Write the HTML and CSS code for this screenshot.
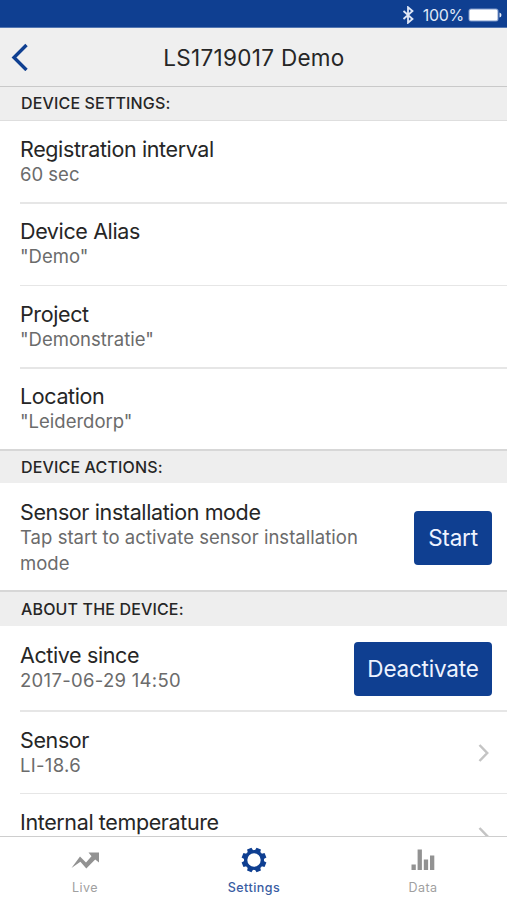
FILE: index.html
```
<!DOCTYPE html>
<html lang="en">
<head>
<meta charset="utf-8">
<title>LS1719017 Demo</title>
<link rel="stylesheet" href="styles.css">
</head>
<body>
<div class="app">
  <div class="status">
    <svg class="bluetooth" width="12" height="18" viewBox="0 0 12 18"><path d="M1.5 5 10.5 13 6 16.8V1.2L10.5 5 1.5 13"/></svg>
    <span class="percent">100%</span>
    <svg class="battery" width="34" height="14" viewBox="0 0 34 14"><rect x=".5" y=".5" width="30" height="13" rx="2.5" fill="#7d98ca"/><rect x="1.5" y="1.5" width="28" height="11" rx="1.5" fill="#fff"/><path d="M31.5 4.5q2 .5 2 2.5t-2 2.5z" fill="#e5ebf6"/></svg>
  </div>
  <header class="navbar">
    <svg class="back" width="18" height="28" viewBox="0 0 18 28"><path d="M16.5 2 4 14.5 16.5 27"/></svg>
    <h1>LS1719017 Demo</h1>
  </header>
  <main class="list">
    <h2 class="section first">DEVICE SETTINGS:</h2>
    <div class="row"><div class="copy"><div class="title">Registration interval</div><div class="sub">60 sec</div></div></div>
    <div class="row r82"><div class="copy"><div class="title">Device Alias</div><div class="sub">"Demo"</div></div></div>
    <div class="row"><div class="copy"><div class="title">Project</div><div class="sub">"Demonstratie"</div></div></div>
    <div class="row last"><div class="copy"><div class="title">Location</div><div class="sub">"Leiderdorp"</div></div></div>
    <h2 class="section">DEVICE ACTIONS:</h2>
    <div class="row action"><div class="copy"><div class="title">Sensor installation mode</div><div class="sub wide">Tap start to activate sensor installation mode</div></div><button class="start">Start</button></div>
    <h2 class="section about">ABOUT THE DEVICE:</h2>
    <div class="row active"><div class="copy"><div class="title">Active since</div><div class="sub numeric">2017-06-29 14:50</div></div><button class="deactivate">Deactivate</button></div>
    <div class="row r82 sensor"><div class="copy"><div class="title">Sensor</div><div class="sub numeric">LI-18.6</div></div><svg class="chevron" width="12" height="20" viewBox="0 0 12 20"><path d="M2.5 2 10.2 10 2.5 18"/></svg></div>
    <div class="row"><div class="copy"><div class="title">Internal temperature</div></div><svg class="chevron" width="12" height="20" viewBox="0 0 12 20"><path d="M2.5 2 10.2 10 2.5 18"/></svg></div>
  </main>
  <nav class="tabs">
    <a class="tab"><svg width="30" height="24" viewBox="0 0 30 24"><path fill="#929292" d="M1.5 20 10 8.5 16 14.5 21.5 8.2 18.5 4.5H29V14.5L25.2 11.5 16.3 20.5 10.4 13.8Z"/></svg><span>Live</span></a>
    <a class="tab selected"><svg width="26" height="26" viewBox="-13 -13 26 26"><g fill="#0f3f91"><path id="tooth" d="M-3-8.5-2.4-12.4H2.4L3-8.5Z" transform="rotate(22.5)"/><use href="#tooth" transform="rotate(45)"/><use href="#tooth" transform="rotate(90)"/><use href="#tooth" transform="rotate(135)"/><use href="#tooth" transform="rotate(180)"/><use href="#tooth" transform="rotate(225)"/><use href="#tooth" transform="rotate(270)"/><use href="#tooth" transform="rotate(315)"/></g><circle r="8.4" fill="none" stroke="#0f3f91" stroke-width="3.4"/></svg><span>Settings</span></a>
    <a class="tab"><svg width="24" height="24" viewBox="0 0 24 24"><path fill="#929292" d="M.5 16.5h4.3V22H.5zM6.6 1.5h4.3V22H6.6zM12.8 11.5h4.3V22h-4.3zM19 7.5h4.3V22H19z"/></svg><span>Data</span></a>
  </nav>
</div>
</body>
</html>
```
FILE: styles.css
```
* { box-sizing: border-box; }
body { margin: 0; font-family: Inter, "Liberation Sans", sans-serif; background: #fff; color: #262626; }
.app { width: 507px; height: 900px; display: flex; flex-direction: column; overflow: hidden; }
.status { height: 28px; flex: none; background: #0f3f91; border-bottom: 1px solid #5477b2; display: flex; align-items: center; justify-content: flex-end; padding: 2px 6px 0 0; color: #dfe7f6; }
.bluetooth { fill: none; stroke: #dfe7f6; stroke-width: 1.8; margin-right: 9px; }
.percent { font-size: 16px; letter-spacing: -.3px; margin-right: 4px; }
.battery { margin-right: -1px; }
.navbar { height: 59px; flex: none; background: #efefef; border-bottom: 1px solid #c9c9c9; display: grid; grid-template-columns: 40px 1fr 40px; align-items: center; }
.back { margin-left: 10px; fill: none; stroke: #0f3f91; stroke-width: 3.4; }
h1 { margin: 1px 0 0 1px; text-align: center; font-size: 22.5px; font-weight: 400; letter-spacing: .3px; }
.list { flex: 1; min-height: 0; overflow: hidden; }
.section { margin: 0; height: 34px; padding-left: 21px; background: #eee; border-top: 2px solid #d7d7d7; font-size: 16px; line-height: 32px; font-weight: 500; letter-spacing: .15px; }
.section.first { border-top: 0; border-bottom: 1px solid #dedede; line-height: 33px; }
.section.about { height: 36px; line-height: 34px; }
.row { height: 83px; margin-left: 20px; padding: 16px 15px 0 0; border-bottom: 2px solid #e6e6e6; display: flex; align-items: flex-start; justify-content: space-between; }
.r82 { height: 82px; border-bottom-width: 1px; padding-top: 15px; }
.last { height: 80px; border: 0; padding-top: 15px; }
.action { height: 107px; border: 0; padding-top: 17px; }
.active { height: 86px; padding-top: 17px; }
.copy { width: 350px; }
.title { font-size: 21.5px; line-height: 25px; letter-spacing: -.38px; }
.sub { font-size: 18.5px; line-height: 25.5px; color: #6b6b6b; letter-spacing: 0; }
.wide { letter-spacing: .03px; }
.numeric { letter-spacing: .3px; }
button { height: 54px; padding: 0 0 1px; border: 0; border-radius: 4px; background: #0f3f91; color: #eef3ff; font: 22.5px Inter, sans-serif; letter-spacing: -.2px; flex: none; }
.start { width: 78px; margin-top: 11px; }
.deactivate { width: 138px; margin-top: -1px; }
.chevron { margin: 16px 3px 0 0; flex: none; fill: none; stroke: #c4c4c4; stroke-width: 2.5; }
.sensor .title { line-height: 26px; }
.tabs { height: 64px; flex: none; border-top: 1px solid #cecece; background: #fff; display: grid; grid-template-columns: repeat(3, 1fr); }
.tab { display: flex; flex-direction: column; align-items: center; padding-top: 10px; color: #a0a0a0; font-size: 12.5px; }
.tab svg { height: 26px; }
.tab span { line-height: 16px; margin: 7px 0 0 1px; letter-spacing: .5px; }
.selected { color: #3a5da3; font-weight: 500; }
```
